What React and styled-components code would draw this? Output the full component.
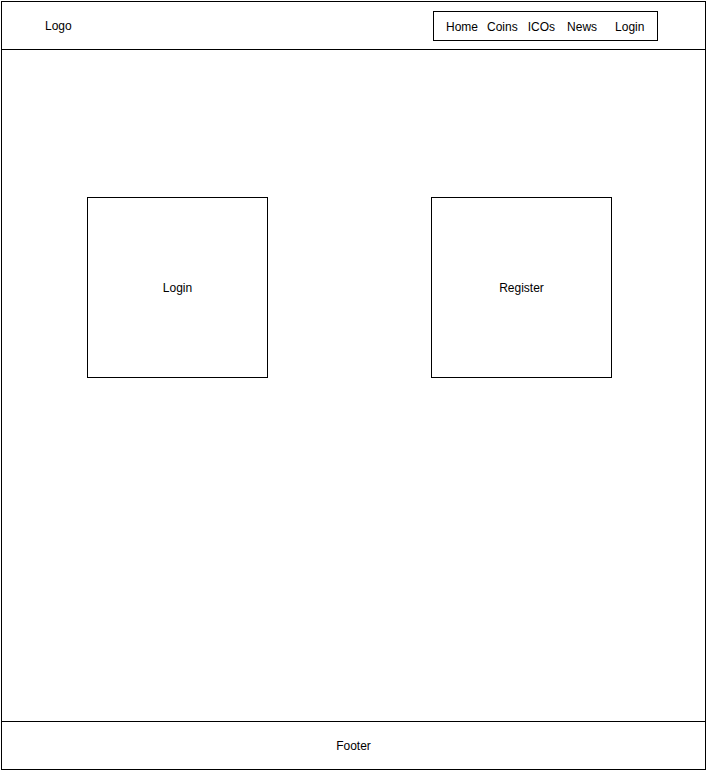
import React from "react";
import styled, { createGlobalStyle } from "styled-components";

const GlobalStyle = createGlobalStyle`
  body {
    margin: 0;
    background: #fff;
    font-family: "Liberation Sans", Arial, sans-serif;
    font-size: 12px;
    color: #000;
  }
`;

const Frame = styled.div`
  box-sizing: border-box;
  margin: 1px 0 0 1px;
  width: 705px;
  height: 769px;
  border: 1px solid #000;
  display: flex;
  flex-direction: column;
`;

const Header = styled.header`
  box-sizing: border-box;
  height: 48px;
  flex: none;
  border-bottom: 1px solid #000;
  display: flex;
  align-items: center;
  justify-content: space-between;
`;

const Logo = styled.div`
  padding-left: 43px;
  margin-top: 1px;
`;

const Nav = styled.nav`
  box-sizing: border-box;
  align-self: flex-start;
  width: 225px;
  height: 30px;
  margin: 9px 47px 0 0;
  border: 1px solid #000;
  display: flex;
  align-items: center;
  padding-left: 12px;
`;

const NavItem = styled.span`
  margin-left: ${(p) => p.$gap || 0}px;
  margin-top: 2px;
`;

const Main = styled.main`
  flex: 1;
  display: flex;
  align-items: flex-start;
  padding: 147px 0 0 85px;
  gap: 163px;
`;

const Card = styled.div`
  box-sizing: border-box;
  width: 181px;
  height: 181px;
  border: 1px solid #000;
  display: flex;
  align-items: center;
  justify-content: center;
`;

const Footer = styled.footer`
  box-sizing: border-box;
  height: 48px;
  flex: none;
  border-top: 1px solid #000;
  display: flex;
  align-items: center;
  justify-content: center;
`;

const navLinks = [
  { label: "Home", gap: 0 },
  { label: "Coins", gap: 9 },
  { label: "ICOs", gap: 10 },
  { label: "News", gap: 12 },
  { label: "Login", gap: 18 },
];

export default function App() {
  return (
    <>
      <GlobalStyle />
      <Frame>
        <Header>
          <Logo>Logo</Logo>
          <Nav>
            {navLinks.map((l) => (
              <NavItem key={l.label} $gap={l.gap}>
                {l.label}
              </NavItem>
            ))}
          </Nav>
        </Header>
        <Main>
          <Card>Login</Card>
          <Card>Register</Card>
        </Main>
        <Footer>Footer</Footer>
      </Frame>
    </>
  );
}
